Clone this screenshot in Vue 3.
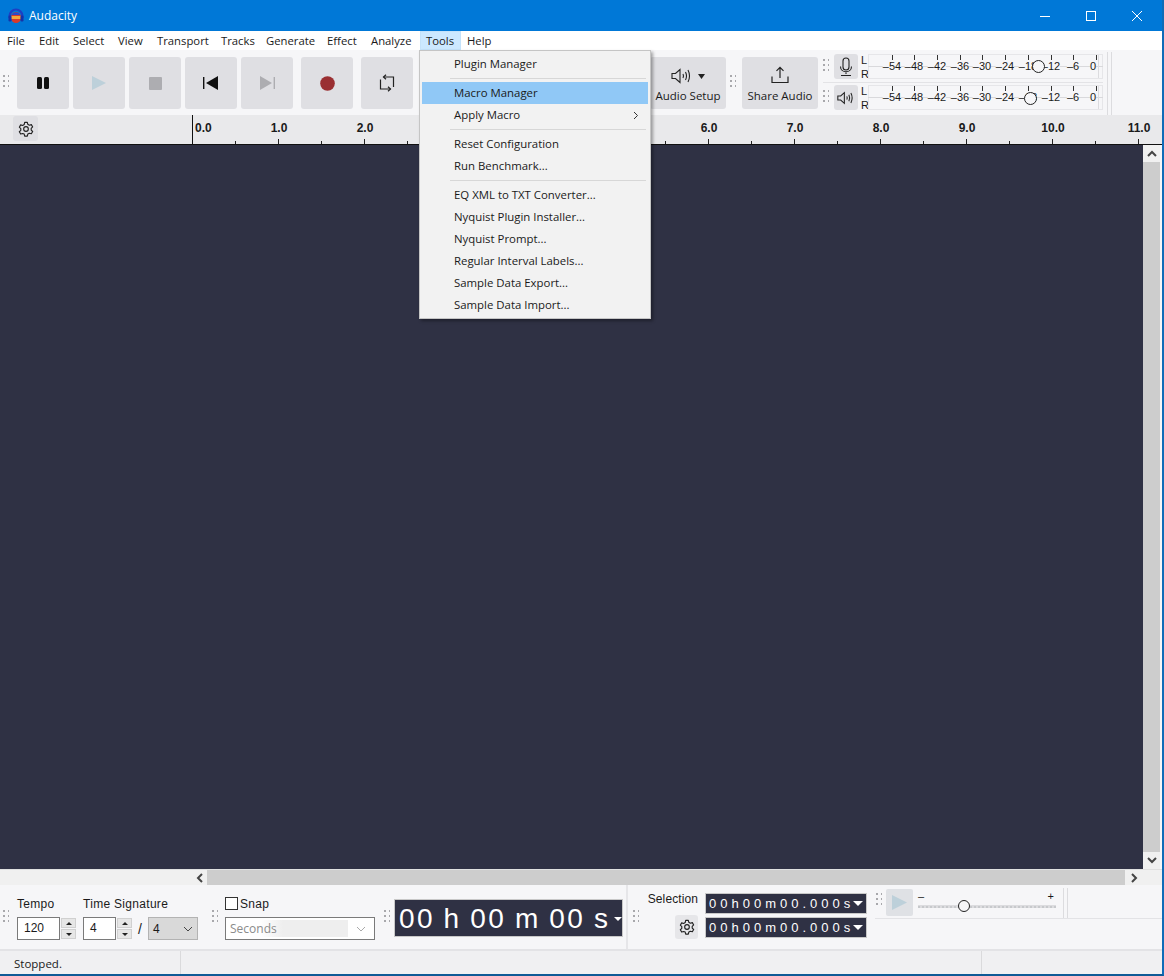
<script setup>
const menus = [
  { t: 'File', w: 32 }, { t: 'Edit', w: 34 }, { t: 'Select', w: 45 }, { t: 'View', w: 39 },
  { t: 'Transport', w: 64 }, { t: 'Tracks', w: 45 }, { t: 'Generate', w: 61 }, { t: 'Effect', w: 44 },
  { t: 'Analyze', w: 55 }, { t: 'Tools', w: 41 }, { t: 'Help', w: 36 }
]
const ticks = Array.from({length: 23}, (_, i) => i + 1)
const seconds = Array.from({length: 12}, (_, i) => i)
const meterScale = [
  { s: '–54', x: 892 }, { s: '–48', x: 914 }, { s: '–42', x: 937 }, { s: '–36', x: 960 }, { s: '–30', x: 982 },
  { s: '–24', x: 1005 }, { s: '–18', x: 1028 }, { s: '–12', x: 1051 }, { s: '–6', x: 1073 }, { s: '0', x: 1096, lx: 1093 }
]
const menuGroups = [
  [{t:'Plugin Manager'}],
  [{t:'Macro Manager',active:true},{t:'Apply Macro',sub:true}],
  [{t:'Reset Configuration'},{t:'Run Benchmark...'}],
  [{t:'EQ XML to TXT Converter...'},{t:'Nyquist Plugin Installer...'},{t:'Nyquist Prompt...'},{t:'Regular Interval Labels...'},{t:'Sample Data Export...'},{t:'Sample Data Import...'}]
]
const tickX = i => (i * 43 - 1) + 'px'
const secStyle = i => i === 0
  ? { left: '2px' }
  : { left: (i * 86) + 'px', transform: 'translateX(-50%)' }
const scaleX = p => (p - 868) + 'px'
</script>

<template>
  <div class="window">
    <header class="titlebar">
      <svg class="logo" width="16" height="16" viewBox="0 0 16 16">
        <path d="M1.500 10V8a6.500 6.500 0 0 1 13 0v2" fill="none" stroke="#1d3fc4" stroke-width="2.200"/>
        <ellipse cx="8" cy="9.500" rx="5" ry="5.500" fill="#d8392b"/>
        <path d="M3.200 8h9.600v3H3.200z" fill="#f2a63a"/>
        <path d="M3.500 7a5 5 0 0 1 9 0z" fill="#2a49c9"/>
        <rect x="0.500" y="7.500" width="3" height="6" rx="1.200" fill="#1533a8"/>
        <rect x="12.500" y="7.500" width="3" height="6" rx="1.200" fill="#1533a8"/>
      </svg>
      <span class="title">Audacity</span>
      <div class="winbtns">
        <svg width="12" height="12" viewBox="0 0 12 12"><path d="M1 6.5h10" stroke="#fff"/></svg>
        <svg width="12" height="12" viewBox="0 0 12 12"><rect x="1.5" y="1.5" width="9" height="9" fill="none" stroke="#fff"/></svg>
        <svg width="12" height="12" viewBox="0 0 12 12"><path d="M1 1l10 10M11 1L1 11" stroke="#fff" fill="none"/></svg>
      </div>
    </header>

    <nav class="menubar">
      <span v-for="m in menus" :key="m.t" class="menuitem" :class="{ open: m.t === 'Tools' }" :style="{ width: m.w + 'px' }">{{ m.t }}</span>
    </nav>

    <section class="toptools">
      <i class="grip tallgrip"></i>
      <div class="transport">
        <button class="tbtn"><svg width="14" height="14" viewBox="0 0 14 14"><rect x="1" y="1" width="5" height="12" rx="1.5" fill="#111"/><rect x="8" y="1" width="5" height="12" rx="1.5" fill="#111"/></svg></button>
        <button class="tbtn"><svg width="16" height="16" viewBox="0 0 16 16"><path d="M1 1l14 7-14 7z" fill="#bdd0da"/></svg></button>
        <button class="tbtn"><svg width="13" height="13" viewBox="0 0 13 13"><rect width="13" height="13" rx="1" fill="#adadb1"/></svg></button>
        <button class="tbtn"><svg width="16" height="14" viewBox="0 0 16 14"><rect x="0" y="1" width="1.4" height="12" fill="#111"/><path d="M15 0v14L3 7z" fill="#111"/></svg></button>
        <button class="tbtn"><svg width="16" height="14" viewBox="0 0 16 14"><rect x="14.6" y="1" width="1.4" height="12" fill="#adadb1"/><path d="M1 0v14l12-7z" fill="#adadb1"/></svg></button>
        <button class="tbtn gapl"><svg width="15" height="15" viewBox="0 0 15 15"><circle cx="7.5" cy="7.5" r="7.3" fill="#9a2f32"/></svg></button>
        <button class="tbtn gapl"><svg width="16" height="18" viewBox="0 0 16 18" fill="none" stroke="#222" stroke-width="1.2"><path d="M14.500 13V3H4.500M1.500 5.500V15H11.500"/><path d="M7 .8L4.500 3 7 5.200M9 12.800l2.500 2.200L9 17.200"/></svg></button>
      </div>
      <div class="toolspace"></div>
      <button class="labelbtn audio">
        <span class="btnicon">
          <svg width="22" height="16" viewBox="0 0 22 16" fill="none" stroke="#222" stroke-width="1.1"><path d="M1 5.500h3.500L9 1.500v13l-4.500-4H1z"/><path d="M12 6q1 2 0 4M14.500 4q2 4 0 8M17 2q3 6 0 12"/></svg>
          <svg class="caret" width="7" height="5" viewBox="0 0 7 5"><path d="M0 0h7L3.500 5z" fill="#222"/></svg>
        </span>
        <span>Audio Setup</span>
      </button>
      <i class="grip midgrip"></i>
      <button class="labelbtn share">
        <span class="btnicon">
          <svg width="18" height="18" viewBox="0 0 18 18" fill="none" stroke="#222" stroke-width="1.2"><path d="M9 12V1.500M5.500 4.800L9 1.300l3.500 3.500M1 10.500v6h16v-6"/></svg>
        </span>
        <span>Share Audio</span>
      </button>
      <div class="meters">
        <div class="meterrow">
          <i class="grip smallgrip"></i>
          <button class="meterbtn"><svg width="14" height="20" viewBox="0 0 14 20" fill="none" stroke="#222" stroke-width="1.1"><rect x="4" y="1" width="6" height="12" rx="3"/><path d="M1.500 9.500c0 7 11 7 11 0M7 15.500V17M2 18.500h10"/></svg></button>
          <div class="lr"><span>L</span><span>R</span></div>
          <div class="meter">
            <i class="meterline"></i>
            <template v-for="m in meterScale" :key="m.s">
              <i class="mtick" :style="{ left: scaleX(m.x) }"></i>
              <span class="mlabel" :style="{ left: scaleX(m.lx || m.x) }">{{ m.s }}</span>
            </template>
            <i class="knob knob-a"></i>
            <i class="meterend"></i>
          </div>
        </div>
        <div class="meterrow">
          <i class="grip smallgrip"></i>
          <button class="meterbtn"><svg width="18" height="16" viewBox="0 0 22 16" fill="none" stroke="#222" stroke-width="1.3"><path d="M1 5.500h3.500L9 1.500v13l-4.500-4H1z"/><path d="M12 6q1 2 0 4M14.500 4q2 4 0 8M17 2q3 6 0 12"/></svg></button>
          <div class="lr"><span>L</span><span>R</span></div>
          <div class="meter">
            <i class="meterline"></i>
            <template v-for="m in meterScale" :key="m.s">
              <i class="mtick" :style="{ left: scaleX(m.x) }"></i>
              <span class="mlabel" :style="{ left: scaleX(m.lx || m.x) }">{{ m.s }}</span>
            </template>
            <i class="knob knob-b"></i>
            <i class="meterend"></i>
          </div>
        </div>
      </div>
      <i class="vrule"></i>
    </section>

    <section class="rulerbar">
      <div class="rulerhead">
        <button class="gearbtn"><svg width="16" height="16" viewBox="0 0 24 24" fill="none" stroke="#222" stroke-width="1.700"><circle cx="12" cy="12" r="3.500"/><path d="M10 2h4l.7 3 2.300 1.300 3-.9 2 3.500-2.200 2.100v2.600l2.200 2.100-2 3.500-3-.9-2.300 1.300-.7 3h-4l-.7-3L7 18.700l-3 .9-2-3.500 2.200-2.100v-2.600L2 9.300l2-3.500 3 .9 2.300-1.300z" stroke-linejoin="round"/></svg></button>
      </div>
      <div class="ruler">
        <i v-for="i in ticks" :key="'t' + i" class="rtick" :class="{ major: i % 2 === 0 }" :style="{ left: tickX(i) }"></i>
        <span v-for="i in seconds" :key="'s' + i" class="rlabel" :style="secStyle(i)">{{ i }}.0</span>
      </div>
    </section>

    <main class="canvasrow">
      <div class="canvas"></div>
      <div class="vscroll">
        <svg width="10" height="7" viewBox="0 0 10 7"><path d="M1 6l4-4 4 4" fill="none" stroke="#444" stroke-width="2"/></svg>
        <div class="vthumb"></div>
        <svg width="10" height="7" viewBox="0 0 10 7"><path d="M1 1l4 4 4-4" fill="none" stroke="#444" stroke-width="2"/></svg>
      </div>
    </main>

    <div class="hscroll">
      <svg width="7" height="10" viewBox="0 0 7 10"><path d="M6 1L2 5l4 4" fill="none" stroke="#444" stroke-width="2"/></svg>
      <div class="hthumb"></div>
      <svg width="7" height="10" viewBox="0 0 7 10"><path d="M1 1l4 4-4 4" fill="none" stroke="#444" stroke-width="2"/></svg>
    </div>

    <section class="bottomtools">
      <i class="grip bgrip g1"></i>
      <div class="field tempo">
        <label>Tempo</label>
        <div class="spinrow"><span class="input w43">120</span><span class="spin"><b class="up"></b><b class="down"></b></span></div>
      </div>
      <div class="field sig">
        <label>Time Signature</label>
        <div class="spinrow">
          <span class="input w33">4</span><span class="spin"><b class="up"></b><b class="down"></b></span>
          <span class="slash">/</span>
          <span class="selectgrey">4<svg width="10" height="6" viewBox="0 0 10 6"><path d="M1 1l4 4 4-4" fill="none" stroke="#444"/></svg></span>
        </div>
      </div>
      <i class="grip bgrip g2"></i>
      <div class="field snap">
        <div class="snaphead"><span class="check"></span><span>Snap</span></div>
        <span class="selectwhite"><span class="seconds">Seconds</span><svg width="10" height="6" viewBox="0 0 10 6"><path d="M1 1l4 4 4-4" fill="none" stroke="#aaa"/></svg></span>
      </div>
      <i class="grip bgrip g3"></i>
      <div class="bigtime"><span>00 h 00 m 00 s</span><i class="wcaret small"></i></div>
      <i class="vsep"></i>
      <i class="grip bgrip g4"></i>
      <div class="selection">
        <div class="sellabels">
          <span>Selection</span>
          <button class="gearbtn sm"><svg width="16" height="16" viewBox="0 0 24 24" fill="none" stroke="#222" stroke-width="1.700"><circle cx="12" cy="12" r="3.500"/><path d="M10 2h4l.7 3 2.300 1.300 3-.9 2 3.500-2.200 2.100v2.600l2.200 2.100-2 3.500-3-.9-2.300 1.300-.7 3h-4l-.7-3L7 18.700l-3 .9-2-3.500 2.200-2.100v-2.600L2 9.300l2-3.500 3 .9 2.300-1.300z" stroke-linejoin="round"/></svg></button>
        </div>
        <div class="seltimes">
          <div class="smalltime"><span>00 h 00 m 00.000 s</span><i class="wcaret"></i></div>
          <div class="smalltime"><span>00 h 00 m 00.000 s</span><i class="wcaret"></i></div>
        </div>
      </div>
      <div class="playat">
        <i class="grip pgrip"></i>
        <button class="playbtn"><svg width="15" height="15" viewBox="0 0 15 15"><path d="M0 0l15 7.500L0 15z" fill="#bdd0da"/></svg></button>
        <div class="slider">
          <span class="minus">–</span><span class="plus">+</span>
          <i class="sliderline"></i>
          <i class="knob knob-c"></i>
        </div>
        <i class="vrule2"></i>
      </div>
    </section>

    <footer class="statusbar">
      <span class="status1">Stopped.</span>
      <span class="status2"></span>
      <span class="status3"></span>
    </footer>

    <div class="dropdown">
      <template v-for="(g, gi) in menuGroups" :key="gi">
        <div v-if="gi" class="dsep"></div>
        <div v-for="it in g" :key="it.t" class="ditem" :class="{ active: it.active }">
          <span>{{ it.t }}</span>
          <svg v-if="it.sub" width="6" height="9" viewBox="0 0 6 9"><path d="M1 1l3.500 3.500L1 8" fill="none" stroke="#333"/></svg>
        </div>
      </template>
    </div>
  </div>
</template>

<style>
html, body { margin: 0; overflow: hidden; }
</style>

<style scoped>
.window { position: relative; width: 1164px; height: 976px; display: flex; flex-direction: column; box-sizing: border-box; background: #f6f6f8; overflow: hidden; font: 12px "Open Sans", "Noto Sans", sans-serif; color: #1a1a1a; border-right: 2px solid #0f6cb8; border-bottom: 2px solid #0f5a96; }
button { border: 0; padding: 0; margin: 0; font: inherit; color: inherit; display: flex; align-items: center; justify-content: center; }
i { display: block; font-style: normal; }

.titlebar { width: 1164px; height: 31px; flex: none; background: #0078d7; color: #fff; display: flex; align-items: center; padding-left: 8px; box-sizing: border-box; }
.logo { margin-right: 5px; }
.title { font-size: 12px; }
.winbtns { margin-left: auto; display: flex; gap: 34px; padding-right: 21px; }

.menubar { height: 19px; flex: none; background: #fff; display: flex; padding-left: 1px; line-height: 19px; }
.menuitem { padding-left: 6px; box-sizing: border-box; font-size: 11.3px; flex: none; white-space: nowrap; }
.menuitem.open { background: #cce8ff; box-shadow: inset 0 0 0 1px #c4e2fa; }

.toptools { height: 65px; flex: none; display: flex; align-items: flex-start; background: #f6f6f8; position: relative; }
.grip { width: 6px; background-image: radial-gradient(circle at 1px 1px, #a8a8ac 1.1px, transparent 1.300px); background-size: 5px 5px; }
.tallgrip { height: 15px; margin: 25px 8px 0 3px; flex: none; }
.transport { display: flex; gap: 4px; margin-top: 7px; }
.tbtn { width: 52px; height: 52px; background: #dfdfe3; border-radius: 3px; }
.tbtn.gapl { margin-left: 4px; }
.toolspace { width: 237px; flex: none; }
.labelbtn { height: 52px; margin-top: 7px; background: #dfdfe3; border-radius: 3px; flex-direction: column; font-size: 11.5px; gap: 1px; flex: none; }
.btnicon { display: flex; align-items: center; height: 24px; gap: 5px; }
.caret { margin-top: 1px; }
.audio { width: 76px; gap: 0; }
.share { width: 76px; }
.midgrip { height: 15px; margin: 25px 6px 0 4px; flex: none; }
.meters { width: 280px; margin-left: 5px; margin-top: 4px; display: flex; flex-direction: column; gap: 6px; flex: none; position: relative; }
.meters::after { content: ""; position: absolute; left: 0; right: 0; top: 28px; height: 1px; background: #e3e3e6; }
.meterrow { display: flex; height: 25px; align-items: center; }
.smallgrip { height: 15px; margin-right: 5px; flex: none; }
.meterbtn { width: 24px; height: 25px; background: #dfdfe3; border-radius: 3px; flex: none; }
.lr { width: 7px; margin-left: 3px; display: flex; flex-direction: column; font: 11px/14px "Liberation Sans", Arial, sans-serif; height: 28px; flex: none; }
.meter { position: relative; width: 235px; height: 25px; background: #f6f6f8; box-shadow: inset 0 0 0 1px #e6e6e9; flex: none; }
.meterline { position: absolute; left: 0; right: 0; top: 12px; height: 1px; background: #d9d9dc; }
.mtick { position: absolute; top: 1px; width: 1px; height: 5px; background: #333; }
.mlabel { position: absolute; top: 6px; transform: translateX(-50%); font: 11px/13px "Liberation Sans", Arial, sans-serif; background: #f6f6f8; white-space: nowrap; }
.meterend { position: absolute; right: 0; top: 1px; bottom: 1px; width: 4px; border-left: 1px solid #dcdcdf; }
.knob { position: absolute; width: 13px; height: 13px; border: 1.2px solid #222; border-radius: 50%; box-sizing: border-box; background: #f6f6f8; }
.knob-a { left: 164px; top: 6px; }
.knob-b { left: 156px; top: 7px; }
.vrule { position: absolute; left: 1107px; top: 2px; width: 3px; height: 63px; border: solid #dcdcdf; border-width: 0 1px; }

.rulerbar { height: 29px; flex: none; display: flex; background: #e9e9eb; border-bottom: 1px solid #111; position: relative; }
.rulerhead { width: 192px; flex: none; position: relative; }
.gearbtn { width: 25px; height: 25px; background: #dfdfe3; border-radius: 3px; margin: 1px 0 0 13px; }
.ruler { position: relative; flex: 1; border-left: 1px solid #111; }
.rlabel { position: absolute; top: 6px; font: bold 12px/15px "Liberation Sans", Arial, sans-serif; }
.rtick { position: absolute; bottom: 0; width: 1px; height: 3px; background: #222; }
.rtick.major { height: 5px; }

.canvasrow { flex: 1; display: flex; min-height: 0; }
.canvas { flex: 1; background: #2f3144; }
.vscroll { width: 17px; margin-right: 2px; background: #f0f0f0; display: flex; flex-direction: column; align-items: center; justify-content: space-between; padding: 5px 0; box-sizing: border-box; flex: none; }
.vthumb { flex: 1; width: 17px; background: #cdcdcd; margin: 5px 0; }

.hscroll { height: 16px; flex: none; display: flex; align-items: center; background: #f0f0f0; padding-left: 196px; padding-right: 24px; border-top: 1px solid #e0e0e0; box-sizing: border-box; }
.hthumb { flex: 1; height: 15px; background: #cdcdcd; margin: 0 6px 0 4px; }

.bottomtools { height: 66px; flex: none; display: flex; align-items: flex-start; background: #f6f6f8; border-bottom: 2px solid #e3e3e6; box-sizing: border-box; }
.bgrip { height: 15px; flex: none; margin-top: 25px; }
.g1 { margin-left: 3px; margin-right: 8px; }
.g2 { margin: 25px 7px 0 14px; }
.g3 { margin: 25px 4px 0 9px; }
.g4 { margin: 25px 7px 0 5px; }
.field { display: flex; flex-direction: column; margin-top: 11px; flex: none; font: 12px "Liberation Sans", Arial, sans-serif; letter-spacing: .3px; }
.field label { line-height: 17px; }
.tempo { width: 66px; }
.sig { width: 115px; }
.spinrow { display: flex; align-items: center; margin-top: 4px; height: 23px; }
.input { height: 23px; border: 1px solid #7a7a7a; background: #fff; box-sizing: border-box; line-height: 21px; padding-left: 6px; letter-spacing: 0; }
.w43 { width: 43px; }
.w33 { width: 33px; }
.spin { width: 15px; height: 21px; margin-left: 1px; display: flex; flex-direction: column; gap: 1px; }
.spin b { flex: 1; background: #e6e6e6; border: 1px solid #d0d0d0; position: relative; box-sizing: border-box; display: flex; align-items: center; justify-content: center; }
.spin b::after { content: ""; border-left: 3px solid transparent; border-right: 3px solid transparent; }
.spin .up::after { border-bottom: 3px solid #222; }
.spin .down::after { border-top: 3px solid #222; }
.slash { width: 16px; text-align: center; font-size: 14px; }
.selectgrey { width: 50px; height: 23px; background: #d9d9d9; border: 1px solid #b3b3b3; box-sizing: border-box; display: flex; align-items: center; justify-content: space-between; padding: 0 4px; }
.snap { width: 150px; }
.snaphead { display: flex; align-items: center; gap: 2px; height: 15px; }
.check { width: 13px; height: 13px; border: 1px solid #333; background: #fff; box-sizing: border-box; }
.selectwhite { width: 150px; height: 23px; border: 1px solid #7a7a7a; background: #fff; box-sizing: border-box; display: flex; align-items: center; justify-content: space-between; padding: 0 8px 0 4px; margin-top: 6px; color: #8b8b8b; font: 12px "Open Sans", sans-serif; letter-spacing: 0; }
.seconds { flex: 1; background: linear-gradient(90deg, #fff 0 25%, #eeeeee 45% 100%); margin-right: 8px; }
.bigtime { width: 229px; height: 38px; margin-top: 14px; background: #2f3144; border: 1px solid #c8c8c8; box-sizing: border-box; color: #fff; font: 28px/38px "Liberation Sans", Arial, sans-serif; letter-spacing: 2.4px; word-spacing: -1.5px; padding-left: 4px; position: relative; white-space: nowrap; flex: none; }
.wcaret { position: absolute; right: 3px; top: 7px; border-left: 5px solid transparent; border-right: 5px solid transparent; border-top: 5px solid #fff; }
.wcaret.small { top: 17px; right: 0; border-width: 4px 4px 0; }
.vsep { width: 2px; height: 64px; background: #e6e6e9; margin-left: 3px; flex: none; }
.selection { display: flex; margin-top: 7px; width: 221px; flex: none; font: 12px/15px "Liberation Sans", Arial, sans-serif; }
.sellabels { width: 52px; flex: none; display: flex; flex-direction: column; align-items: flex-end; letter-spacing: .1px; }
.gearbtn.sm { width: 23px; height: 24px; margin: 8px 0 0; background: #e6e6e9; flex: none; }
.seltimes { display: flex; flex-direction: column; gap: 3px; margin: 1px 0 0 7px; }
.smalltime { width: 162px; height: 21px; box-sizing: border-box; background: #2f3144; border: 1px solid #c8c8c8; color: #fff; font: 13px/19px "Liberation Sans", Arial, sans-serif; letter-spacing: 4px; word-spacing: -7.6px; padding-left: 3px; position: relative; white-space: nowrap; }
.playat { flex: 1; min-width: 0; height: 30px; margin: 3px 0 0 8px; border-bottom: 1px solid #e3e3e6; display: flex; align-items: flex-start; }
.pgrip { height: 15px; margin: 5px 4px 0 1px; flex: none; }
.playbtn { width: 27px; height: 27px; margin-top: 1px; background: #dfe1e5; border-radius: 2px; flex: none; }
.slider { position: relative; width: 138px; height: 30px; margin-left: 5px; flex: none; }
.minus, .plus { position: absolute; top: 2px; font: 11px/12px "Liberation Sans", Arial, sans-serif; }
.minus { left: 0; }
.plus { right: 2px; }
.sliderline { position: absolute; left: 0; right: 0; top: 17px; height: 1px; border-bottom: 2px dotted #c7c9cc; background: #dcdcdf; }
.knob-c { left: 40px; top: 12px; width: 12px; height: 12px; }
.vrule2 { width: 3px; height: 30px; margin-left: 7px; border: solid #dcdcdf; border-width: 0 1px; flex: none; }

.statusbar { height: 23px; flex: none; display: flex; background: #f0f0f2; line-height: 25px; font-size: 11.5px; }
.status1 { width: 166px; padding-left: 14px; border-right: 1px solid #dadadc; flex: none; }
.status2 { width: 800px; border-right: 1px solid #dadadc; flex: none; }
.status3 { flex: 1; }

.dropdown { position: absolute; left: 419px; top: 50px; width: 232px; height: 269px; box-sizing: border-box; background: #f2f2f2; border: 1px solid #c5c5c5; box-shadow: 2px 2px 3px rgba(0,0,0,.35); padding: 2px 2px 0; font-size: 11.4px; }
.ditem { height: 22px; line-height: 22px; padding-left: 32px; padding-right: 9px; display: flex; align-items: center; justify-content: space-between; }
.ditem.active { background: #90c8f6; }
.dsep { height: 1px; background: #d7d7d7; margin: 3px 2px 3px 28px; }
</style>
